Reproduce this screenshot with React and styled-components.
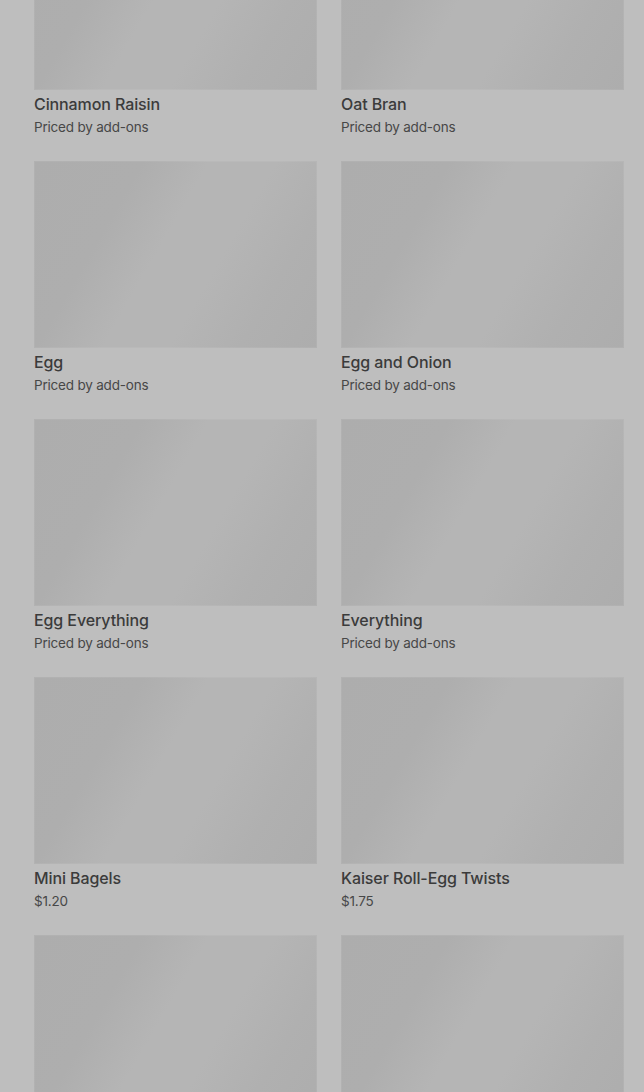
import styled, { createGlobalStyle } from "styled-components";

const GlobalStyle = createGlobalStyle`
  html, body {
    margin: 0;
    padding: 0;
    overflow: hidden;
    background: #bebebe;
  }
  body {
    font-family: "Inter", "Roboto", "Liberation Sans", sans-serif;
  }
`;

const items = [
  { name: "Cinnamon Raisin", price: "Priced by add-ons" },
  { name: "Oat Bran", price: "Priced by add-ons" },
  { name: "Egg", price: "Priced by add-ons" },
  { name: "Egg and Onion", price: "Priced by add-ons" },
  { name: "Egg Everything", price: "Priced by add-ons" },
  { name: "Everything", price: "Priced by add-ons" },
  { name: "Mini Bagels", price: "$1.20" },
  { name: "Kaiser Roll-Egg Twists", price: "$1.75" },
  { name: "", price: "" },
  { name: "", price: "" },
];

const App = () => {
  return (
    <>
      <GlobalStyle />
      <StyledMenu>
        <div className="grid">
          {items.map((item, i) => (
            <Card key={i}>
              <Thumb />
              {item.name && <Title>{item.name}</Title>}
              {item.price && <Price>{item.price}</Price>}
            </Card>
          ))}
        </div>
      </StyledMenu>
    </>
  );
};

export default App;

const StyledMenu = styled.div`
  background: #bebebe;
  height: 100vh;
  padding: 0 20px 0 34px;
  overflow: hidden;
  .grid {
    /* page is scrolled part way down the list */
    margin-top: -97px;
    display: grid;
    grid-template-columns: 283px 283px;
    column-gap: 24px;
    row-gap: 24px;
  }
`;

const Card = styled.div`
  display: flex;
  flex-direction: column;
`;

const Thumb = styled.div`
  height: 187px;
  background: linear-gradient(
    120deg,
    #adadad 0%,
    #aeaeae 28%,
    #b5b5b5 45%,
    #b5b5b5 62%,
    #b0b0b0 80%,
    #adadad 100%
  );
  box-shadow: inset 0 0 0 1px rgba(255, 255, 255, 0.06);
`;

const Title = styled.span`
  font-size: 16px;
  font-weight: 500;
  line-height: 22px;
  margin-top: 3px;
  color: #3b3b3b;
  letter-spacing: -0.1px;
`;

const Price = styled.span`
  font-size: 13.5px;
  font-weight: 400;
  line-height: 20px;
  height: 20px;
  margin-top: 2px;
  color: #474747;
  letter-spacing: -0.2px;
`;
